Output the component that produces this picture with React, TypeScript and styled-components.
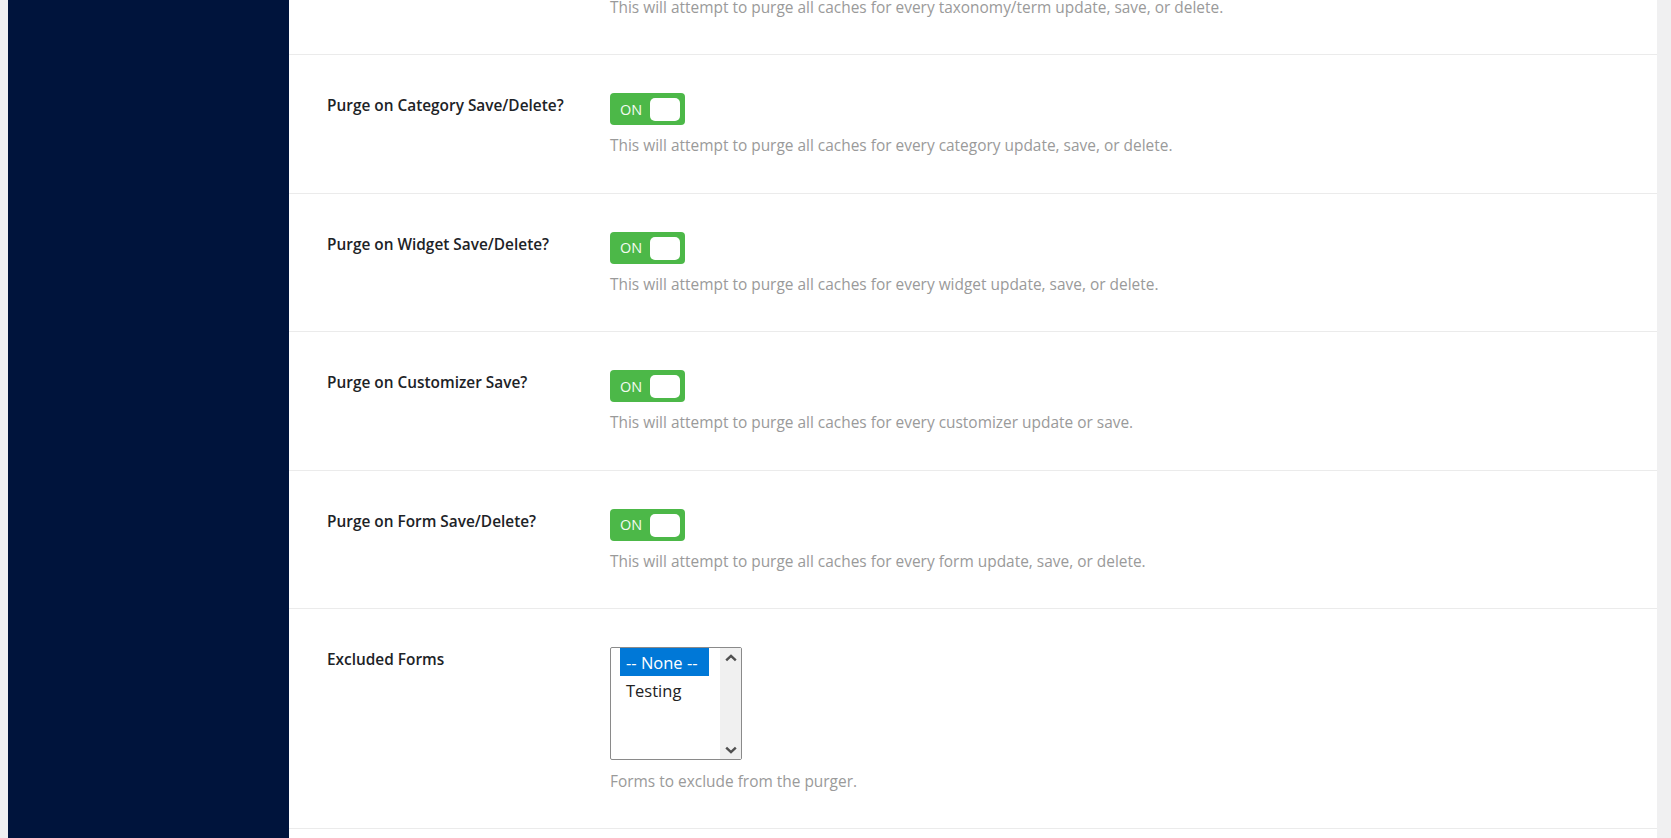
import * as React from 'react'
import styled, { createGlobalStyle } from 'styled-components'

const GlobalStyle = createGlobalStyle`
  html, body {
    margin: 0;
    padding: 0;
    height: 100%;
    background: #f0f0f1;
    font-family: "Open Sans", "Noto Sans", sans-serif;
  }
`

const Page = styled.div`
  display: flex;
  height: 100vh;
  overflow: hidden;
  padding: 0 14px 0 8px;
  box-sizing: border-box;
`

const Sidebar = styled.aside`
  width: 281px;
  flex: none;
  background: #00143c;
`

const Main = styled.main`
  flex: 1;
  background: #fff;
  overflow: hidden;
`

// the page is scrolled: the taxonomy row is mostly above the viewport
const Rows = styled.div`
  margin-top: -83px;
`

const Row = styled.section`
  display: flex;
  padding: 38px 0 37.4px 38px;
  border-bottom: 1px solid #ebebeb;
`

const Label = styled.div`
  width: 283px;
  flex: none;
  padding-top: 3px;
  font-size: 15.4px;
  font-weight: 600;
  color: #1d2327;
  line-height: 20px;
`

const Field = styled.div`
  display: flex;
  flex-direction: column;
  align-items: flex-start;
`

const Description = styled.p<{ $gap?: number }>`
  margin: ${ p => p.$gap ?? 10 }px 0 0;
  font-size: 15.45px;
  line-height: 20px;
  color: #9a9a9a;
`

const Switch = styled.div`
  position: relative;
  width: 75px;
  height: 32px;
  border-radius: 4px;
  background: #4cb848;
  box-sizing: border-box;
  padding-left: 10px;
  display: flex;
  align-items: center;
  font-size: 14.5px;
  color: #f4fbf2;
`

const Knob = styled.span`
  position: absolute;
  top: 5px;
  right: 5px;
  width: 30px;
  height: 23px;
  border-radius: 5px;
  background: #fff;
`

const ListBox = styled.div`
  display: flex;
  width: 132px;
  height: 113px;
  border: 1px solid #8a8a8a;
  border-radius: 2px;
  box-sizing: border-box;
  background: #fff;
`

const Options = styled.div`
  flex: 1;
  padding-left: 9px;
  display: flex;
  flex-direction: column;
  align-items: flex-start;
`

const Option = styled.div<{ $selected?: boolean }>`
  height: 28px;
  line-height: 29px;
  padding: 0 11px 0 6px;
  font-size: 16.5px;
  color: ${ p => p.$selected ? '#fff' : '#222' };
  background: ${ p => p.$selected ? '#0078d7' : 'transparent' };
`

const ScrollTrack = styled.div`
  width: 21px;
  background: #f0f0f0;
  display: flex;
  flex-direction: column;
  justify-content: space-between;
  align-items: center;
  padding: 6px 0 5px;
`

const Chevron = ({ down }: { down?: boolean }) => (
  <svg width={ 12 } height={ 8 } viewBox={ '0 0 12 8' }>
    <path
      d={ down ? 'M1.2 1.6 L6 6.2 L10.8 1.6' : 'M1.2 6.4 L6 1.8 L10.8 6.4' }
      fill={ 'none' }
      stroke={ '#505050' }
      strokeWidth={ 2.4 }
    />
  </svg>
)

const Toggle = () => (
  <Switch>
    { 'ON' }
    <Knob />
  </Switch>
)

const toggles = [
  { label: 'Purge on Taxonomy/Term Save/Delete?', text: 'This will attempt to purge all caches for every taxonomy/term update, save, or delete.' },
  { label: 'Purge on Category Save/Delete?', text: 'This will attempt to purge all caches for every category update, save, or delete.' },
  { label: 'Purge on Widget Save/Delete?', text: 'This will attempt to purge all caches for every widget update, save, or delete.' },
  { label: 'Purge on Customizer Save?', text: 'This will attempt to purge all caches for every customizer update or save.' },
  { label: 'Purge on Form Save/Delete?', text: 'This will attempt to purge all caches for every form update, save, or delete.' },
]

export default function App() {
  return (
    <>
      <GlobalStyle />
      <Page>
        <Sidebar />
        <Main>
          <Rows>
            { toggles.map(t => (
              <Row key={ t.label }>
                <Label>{ t.label }</Label>
                <Field>
                  <Toggle />
                  <Description>{ t.text }</Description>
                </Field>
              </Row>
            )) }
            <Row>
              <Label>{ 'Excluded Forms' }</Label>
              <Field>
                <ListBox>
                  <Options>
                    <Option $selected>{ '-- None --' }</Option>
                    <Option>{ 'Testing' }</Option>
                  </Options>
                  <ScrollTrack>
                    <Chevron />
                    <Chevron down />
                  </ScrollTrack>
                </ListBox>
                <Description $gap={ 11 }>{ 'Forms to exclude from the purger.' }</Description>
              </Field>
            </Row>
          </Rows>
        </Main>
      </Page>
    </>
  )
}
